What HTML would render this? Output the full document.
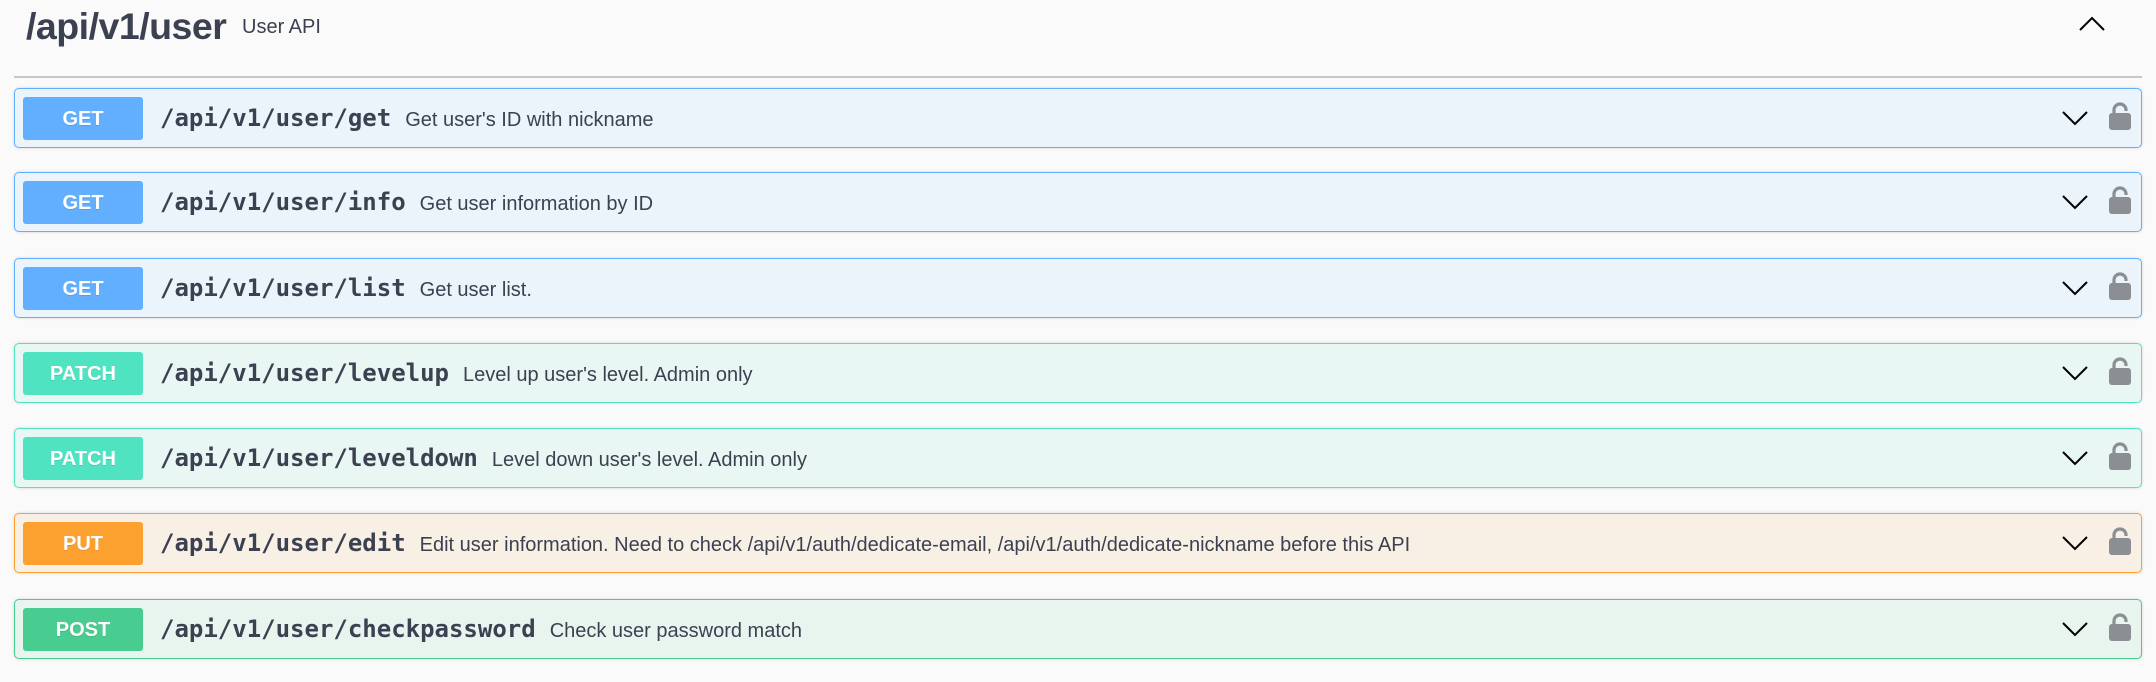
<!DOCTYPE html>
<html><head><meta charset="utf-8"><style>
*{margin:0;padding:0;box-sizing:border-box}
body{width:2156px;height:682px;background:#fafafa;font-family:"Liberation Sans",sans-serif;color:#3b4151;position:relative;overflow:hidden}
.title{position:absolute;left:26px;top:5px;font-size:37.5px;font-weight:bold;letter-spacing:-0.5px}
.sub{position:absolute;left:242px;top:16px;font-size:20px}
.up{position:absolute;left:2079px;top:16px}
.div{position:absolute;left:14px;top:76px;width:2128px;height:2px;background:#c6c8cc}
.row{position:absolute;left:14px;width:2128px;height:60px;border:1.5px solid;border-radius:5px;box-shadow:0 0 3px rgba(0,0,0,.15)}
.b{position:absolute;left:8px;top:8px;width:120px;height:43px;border-radius:3px;color:#fff;font-weight:bold;font-size:20px;text-align:center;line-height:44px;text-shadow:0 1px 0 rgba(0,0,0,.1)}
.p{position:absolute;left:145px;top:15px;font-family:"DejaVu Sans Mono","Liberation Mono",monospace;font-weight:bold;font-size:24px;line-height:28px;white-space:nowrap}
.p span{font-family:"Liberation Sans",sans-serif;font-weight:normal;font-size:20px;margin-left:14px}
.ch{position:absolute;left:2047px;top:21px}
.lk{position:absolute;left:2094px;top:13px}
.g{border-color:#61affe;background:#ebf3fb}.g .b{background:#61affe}
.pa{border-color:#50e3c2;background:#e8f7f3}.pa .b{background:#50e3c2}
.pu{border-color:#fca130;background:#f9f0e5}.pu .b{background:#fca130}
.po{border-color:#49cc90;background:#e8f5ef}.po .b{background:#49cc90}
</style></head><body>
<div class="title">/api/v1/user</div>
<div class="sub">User API</div>
<svg class="up" width="26" height="16" viewBox="0 0 26 16"><path d="M1 14 L13 2 L25 14" fill="none" stroke="#000" stroke-width="2"/></svg>
<div class="div"></div>
<div class="row g" style="top:88px"><div class="b">GET</div><div class="p">/api/v1/user/get<span>Get user's ID with nickname</span></div>ICONS</div>
<div class="row g" style="top:172px"><div class="b">GET</div><div class="p">/api/v1/user/info<span>Get user information by ID</span></div>ICONS</div>
<div class="row g" style="top:258px"><div class="b">GET</div><div class="p">/api/v1/user/list<span>Get user list.</span></div>ICONS</div>
<div class="row pa" style="top:343px"><div class="b">PATCH</div><div class="p">/api/v1/user/levelup<span>Level up user's level. Admin only</span></div>ICONS</div>
<div class="row pa" style="top:428px"><div class="b">PATCH</div><div class="p">/api/v1/user/leveldown<span>Level down user's level. Admin only</span></div>ICONS</div>
<div class="row pu" style="top:513px"><div class="b">PUT</div><div class="p">/api/v1/user/edit<span>Edit user information. Need to check /api/v1/auth/dedicate-email, /api/v1/auth/dedicate-nickname before this API</span></div>ICONS</div>
<div class="row po" style="top:599px"><div class="b">POST</div><div class="p">/api/v1/user/checkpassword<span>Check user password match</span></div>ICONS</div>
<script>
var ic='<svg class="ch" width="26" height="16" viewBox="0 0 26 16"><path d="M1 2 L13 14 L25 2" fill="none" stroke="#000" stroke-width="2"/></svg><svg class="lk" width="22" height="28" viewBox="0 0 22 28"><path d="M5 12 V8 A6 6 0 0 1 17 8 V9" fill="none" stroke="#8b8e93" stroke-width="3.2"/><rect x="0" y="11" width="22" height="17" rx="3" fill="#8b8e93"/></svg>';
document.querySelectorAll('.row').forEach(function(r){r.innerHTML=r.innerHTML.replace('ICONS',ic)});
</script>
</body></html>
